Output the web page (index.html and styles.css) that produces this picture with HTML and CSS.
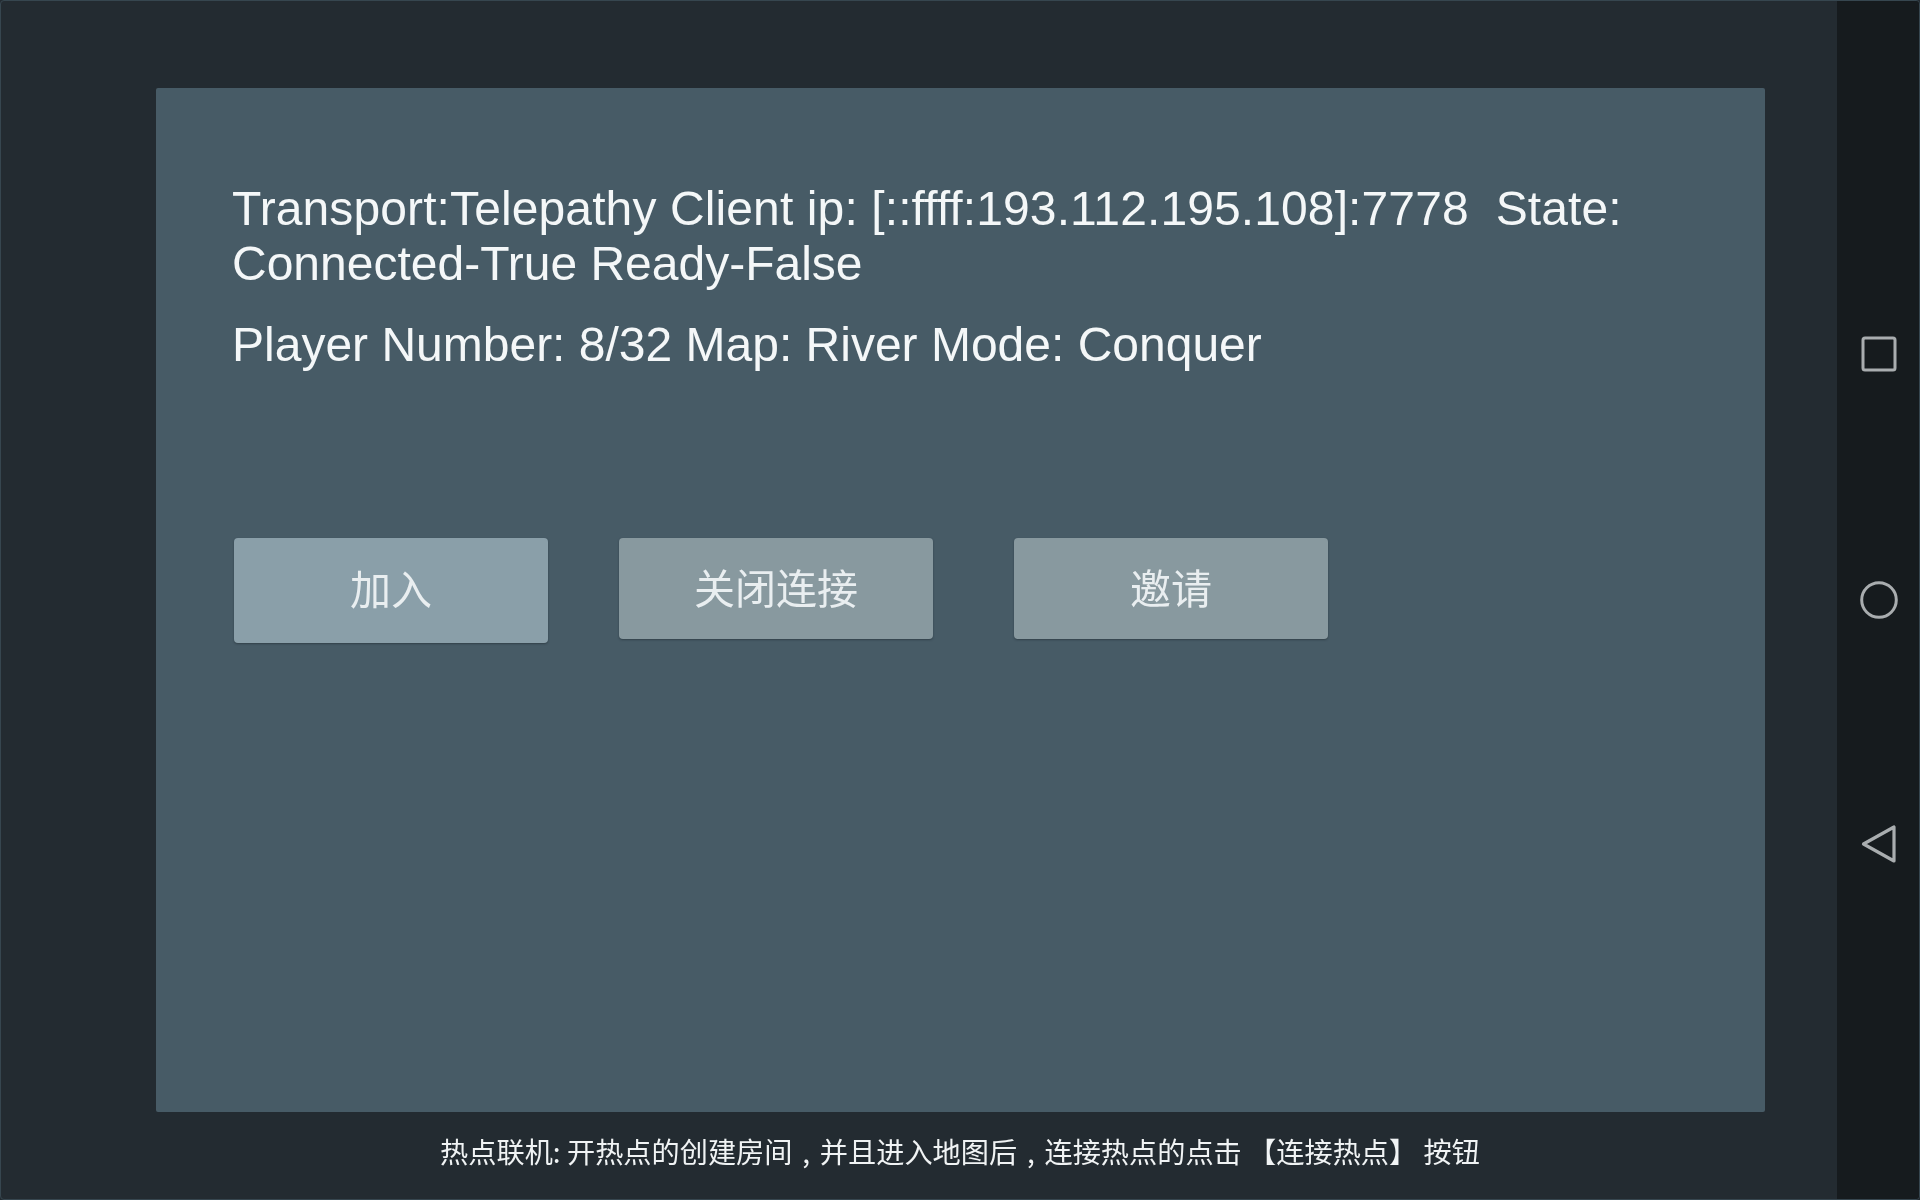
FILE: index.html
```html
<!DOCTYPE html>
<html lang="zh">
<head>
<meta charset="utf-8">
<title>Room</title>
<link rel="stylesheet" href="styles.css">
</head>
<body>
<div class="screen">
  <main class="content">
    <section class="panel">
      <p class="status">Transport:Telepathy Client ip: [::ffff:193.112.195.108]:7778&nbsp; State: Connected-True Ready-False</p>
      <p class="info">Player Number: 8/32 Map: River Mode: Conquer</p>
      <div class="actions">
        <button class="btn btn-tall"><span class="btn-label">加入</span></button>
        <button class="btn btn-close"><span class="btn-label">关闭连接</span></button>
        <button class="btn btn-invite"><span class="btn-label">邀请</span></button>
      </div>
    </section>
    <footer class="hint"><span class="hint-text">热点联机: 开热点的创建房间<span class="comma">,</span>并且进入地图后<span class="comma">,</span>连接热点的点击 【连接热点】 按钮</span></footer>
  </main>
  <nav class="navbar">
    <svg class="nav-icon" viewBox="0 0 36 36" width="36" height="36"><rect x="2" y="2" width="32" height="32" rx="2" fill="none" stroke="#a9adaf" stroke-width="3"/></svg>
    <svg class="nav-icon nav-circle" viewBox="0 0 38 38" width="38" height="38"><circle cx="19" cy="19" r="17.3" fill="none" stroke="#a9adaf" stroke-width="3"/></svg>
    <svg class="nav-icon" viewBox="0 0 36 40" width="36" height="40"><path d="M2.5 20 L33 3 L33 37 Z" fill="none" stroke="#a9adaf" stroke-width="3.2" stroke-linejoin="round"/></svg>
  </nav>
</div>
</body>
</html>
```
FILE: styles.css
```css
* { box-sizing: border-box; }
html, body { margin: 0; padding: 0; }
body { width: 1920px; height: 1200px; background: #232b31; overflow: hidden; }
.screen {
  display: flex;
  width: 1920px;
  height: 1200px;
  border: 1px solid #36464f;
  border-radius: 4px;
  background: #232b31;
  overflow: hidden;
}
.content {
  flex: 1;
  display: flex;
  flex-direction: column;
  padding: 87px 72px 0 155px;
}
.panel {
  height: 1024px;
  background: #475b66;
  border-radius: 2px;
  padding: 93px 76px 0 76px;
  color: #f4f7f8;
  font-family: "Liberation Sans", sans-serif;
  font-size: 48px;
  line-height: 55px;
}
.status, .info { filter: blur(.4px); }
.status { margin: 0; }
.status::first-line { letter-spacing: .11px; }
.info { margin: 26px 0 0; }
.actions {
  display: flex;
  align-items: flex-start;
  margin-top: 166px;
  padding-left: 1px;
}
.btn {
  width: 314px;
  border: 0;
  border-radius: 4px;
  padding: 0 0 6px;
  color: #e9eef0;
  font-family: "Noto Sans CJK SC", sans-serif;
  font-size: 41px;
  box-shadow: 0 1px 2px rgba(30, 40, 46, .5);
}
.btn-label { display: inline-block; filter: blur(.5px); }
.btn-tall { height: 105px; background: #8a9fa9; margin-left: 1px; padding-bottom: 8px; }
.btn-close { height: 101px; background: #88999f; margin-left: 71px; }
.btn-invite { height: 101px; background: #88999f; margin-left: 81px; }
.hint {
  flex: 1;
  display: flex;
  align-items: center;
  justify-content: center;
  padding-bottom: 10px;
  color: #f0f3f4;
  font-family: "Noto Sans CJK SC", sans-serif;
  font-size: 28.2px;
  width: 1608px;
}
.hint-text { filter: blur(.3px); }
.comma { display: inline-block; width: .97em; text-align: center; }
.navbar {
  width: 82px;
  flex: none;
  background: #161b1e;
  display: flex;
  flex-direction: column;
  align-items: center;
  padding: 335px 0 335px 2px;
  justify-content: space-between;
}
.nav-circle { margin-top: 3px; }
```
